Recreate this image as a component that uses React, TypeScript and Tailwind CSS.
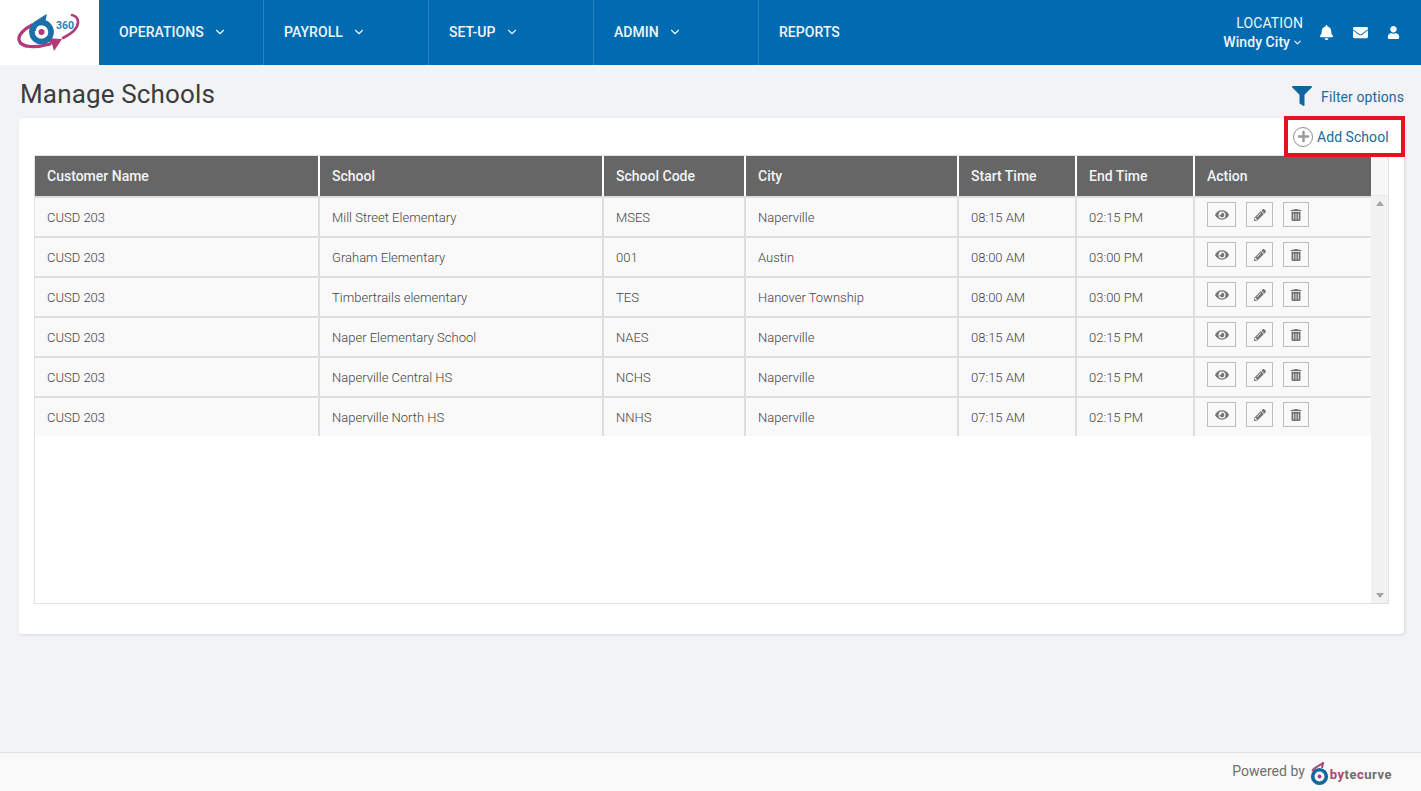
import React from 'react';
import { ChevronDown } from 'lucide-react';
import { FaBell, FaEnvelope, FaUser, FaFilter, FaEye, FaPencilAlt, FaTrashAlt, FaPlus } from 'react-icons/fa';

const navItems = [
  { label: 'OPERATIONS', caret: true },
  { label: 'PAYROLL', caret: true },
  { label: 'SET-UP', caret: true },
  { label: 'ADMIN', caret: true },
  { label: 'REPORTS', caret: false },
];

const columns = ['Customer Name', 'School', 'School Code', 'City', 'Start Time', 'End Time', 'Action'];

const schools = [
  ['CUSD 203', 'Mill Street Elementary', 'MSES', 'Naperville', '08:15 AM', '02:15 PM'],
  ['CUSD 203', 'Graham Elementary', '001', 'Austin', '08:00 AM', '03:00 PM'],
  ['CUSD 203', 'Timbertrails elementary', 'TES', 'Hanover Township', '08:00 AM', '03:00 PM'],
  ['CUSD 203', 'Naper Elementary School', 'NAES', 'Naperville', '08:15 AM', '02:15 PM'],
  ['CUSD 203', 'Naperville Central HS', 'NCHS', 'Naperville', '07:15 AM', '02:15 PM'],
  ['CUSD 203', 'Naperville North HS', 'NNHS', 'Naperville', '07:15 AM', '02:15 PM'],
];

const gridCols = 'grid grid-cols-[285px_284px_142px_213px_118px_118px_176px]';

function Logo() {
  return (
    <svg width="64" height="42" viewBox="17 11 64 42" fill="none">
      <path d="M32 24 C24 28 18 34 19 39 C21 47 36 47 50 43" stroke="#b23a78" strokeWidth="3.2" strokeLinecap="round" />
      <path d="M44 37 L62 38 L54 50 L52 43 Z" fill="#b23a78" />
      <path d="M63 37 C71 33 78 27 78 21 C78 18 76 15 72 14" stroke="#b23a78" strokeWidth="2.6" strokeLinecap="round" />
      <circle cx="41.5" cy="31" r="9.6" stroke="#1d6fa8" strokeWidth="5.6" />
      <circle cx="41.5" cy="31" r="3" fill="#b23a78" />
      <path d="M31 29 C31 22 38 18 47 13 L45 22 C39 22 36 25 36 30 Z" fill="#1d6fa8" />
      <text x="56" y="28" fontSize="10.5" fontWeight="700" fill="#2f7fb4" fontFamily="Roboto, sans-serif">360</text>
    </svg>
  );
}

function FooterMark() {
  return (
    <svg width="19" height="24" viewBox="0 0 19 24" fill="none">
      <circle cx="9.5" cy="14.5" r="6.8" stroke="#14699c" strokeWidth="3.6" />
      <circle cx="9.5" cy="14.5" r="1.9" fill="#b23a78" />
      <path d="M2 9 C5 5 9 4 13 1 L12 6" stroke="#a8476f" strokeWidth="2" />
    </svg>
  );
}

function ActionButton({ children, className }: { children: React.ReactNode; className: string }) {
  return (
    <button className={`h-[25px] flex items-center justify-center border border-[#bdbdbd] bg-[#f9f9f9] text-[#757575] ${className}`}>
      {children}
    </button>
  );
}

export default function App() {
  return (
    <div className="min-h-[791px] flex flex-col bg-[#f2f3f5] font-['Roboto',sans-serif]">
      {/* Top nav */}
      <header className="h-[65px] flex bg-[#006bb0] text-[#eef6fb]">
        <div className="w-[99px] bg-white flex items-center justify-center pr-[1px]">
          <Logo />
        </div>
        {navItems.map((item) => (
          <div
            key={item.label}
            className={`w-[165px] flex items-center pl-5 pb-[1px] text-sm font-medium tracking-[0.05px] ${item.caret ? 'border-r border-[#2a80ba]' : ''}`}
          >
            {item.label}
            {item.caret && <ChevronDown size={14} strokeWidth={2} className="ml-[9px]" />}
          </div>
        ))}
        <div className="ml-auto flex items-center pr-[21px]">
          <div className="text-right text-sm font-medium leading-[19px]">
            <div className="font-normal tracking-[0.1px]">LOCATION</div>
            <div className="flex items-center justify-end tracking-[0.05px]">
              Windy City
              <ChevronDown size={11} strokeWidth={2.5} className="ml-[2px]" />
            </div>
          </div>
          <FaBell size={15} className="ml-[16px] text-white" />
          <FaEnvelope size={15} className="ml-[19px] text-white" />
          <FaUser size={13} className="ml-[19px] text-white" />
        </div>
      </header>

      {/* Page content */}
      <main className="flex-1 px-[19px] pr-[17px]">
        <div className="h-[53px] flex items-center justify-between">
          <h1 className="text-[26px] text-[#3c3c3c] tracking-[0.15px] pt-[6px] pl-[1px]">Manage Schools</h1>
          <div className="flex items-center text-sm text-[#23689b] tracking-[0.1px] pt-[11px]">
            <FaFilter size={20} className="text-[#0f66a3] mr-[9px] -mt-[3px]" />
            Filter options
          </div>
        </div>

        <section className="relative h-[516px] bg-white rounded-[3px] shadow-[1px_1px_3px_rgba(0,0,0,0.12)] px-[15px] pt-[37px]">
          <div className="absolute top-[-2px] right-[-1px] w-[121px] h-[41px] border-4 border-[#e3141f] flex items-center pl-[5px] text-sm text-[#23689b] tracking-[0.05px]">
            <span className="w-[20px] h-[20px] rounded-full border border-[#8f8f8f] flex items-center justify-center mr-[4px] shrink-0">
              <FaPlus size={13} className="text-[#9a9a9a] shrink-0" />
            </span>
            Add School
          </div>

          <div className="w-[1355px] h-[449px] border border-[#e2e2e2] flex">
            <div className="w-[1336px] flex flex-col">
              <div className={`${gridCols} h-[40px] bg-white`}>
                {columns.map((col) => (
                  <div
                    key={col}
                    className="bg-[#666] border-r-2 border-white last:border-r-0 flex items-center pl-3 pb-[1px] text-sm font-medium text-[#f3f3f3]"
                  >
                    {col}
                  </div>
                ))}
              </div>
              {schools.map((row, i) => (
                <div key={i} className={`${gridCols} h-[40px] bg-[#f9f9f9] border-t-2 border-[#dedede]`}>
                  {row.map((cell, j) => (
                    <div
                      key={j}
                      className="border-r-2 border-[#dedede] flex items-center pl-3 pt-[1px] text-[13px] font-light text-[#444]"
                    >
                      {cell}
                    </div>
                  ))}
                  <div className="flex items-start pl-3 pt-[4px] gap-[10px]">
                    <ActionButton className="w-[29px]"><FaEye size={14} /></ActionButton>
                    <ActionButton className="w-[27px]"><FaPencilAlt size={12} /></ActionButton>
                    <ActionButton className="w-[26px]"><FaTrashAlt size={12} /></ActionButton>
                  </div>
                </div>
              ))}
            </div>
            <div className="flex-1 flex flex-col">
              <div className="h-[40px] bg-[#f7f7f7] border-b border-[#e6e6e6]" />
              <div className="flex-1 bg-[#f1f1f1] flex flex-col justify-between items-center py-[5px]">
                <span className="w-0 h-0 border-x-4 border-x-transparent border-b-[5px] border-b-[#a3a3a3]" />
                <span className="w-0 h-0 border-x-4 border-x-transparent border-t-[5px] border-t-[#a3a3a3]" />
              </div>
            </div>
          </div>
        </section>
      </main>

      {/* Footer */}
      <footer className="h-[39px] bg-[#f9f9f9] border-t border-[#dfdfdf] flex items-center justify-end pr-[29px] text-sm text-[#6f6f6f]">
        <span className="-mt-[2px]">Powered by</span>
        <span className="ml-[5px] mt-[3px] flex items-center">
          <FooterMark />
          <span className="ml-[1px] mt-[3px] text-[13px] font-bold tracking-[0.5px] text-[#6f6f6f]">
            <span className="text-[#a8476f]">by</span>te<span className="text-[#a8476f]">c</span>urve
          </span>
        </span>
      </footer>
    </div>
  );
}
